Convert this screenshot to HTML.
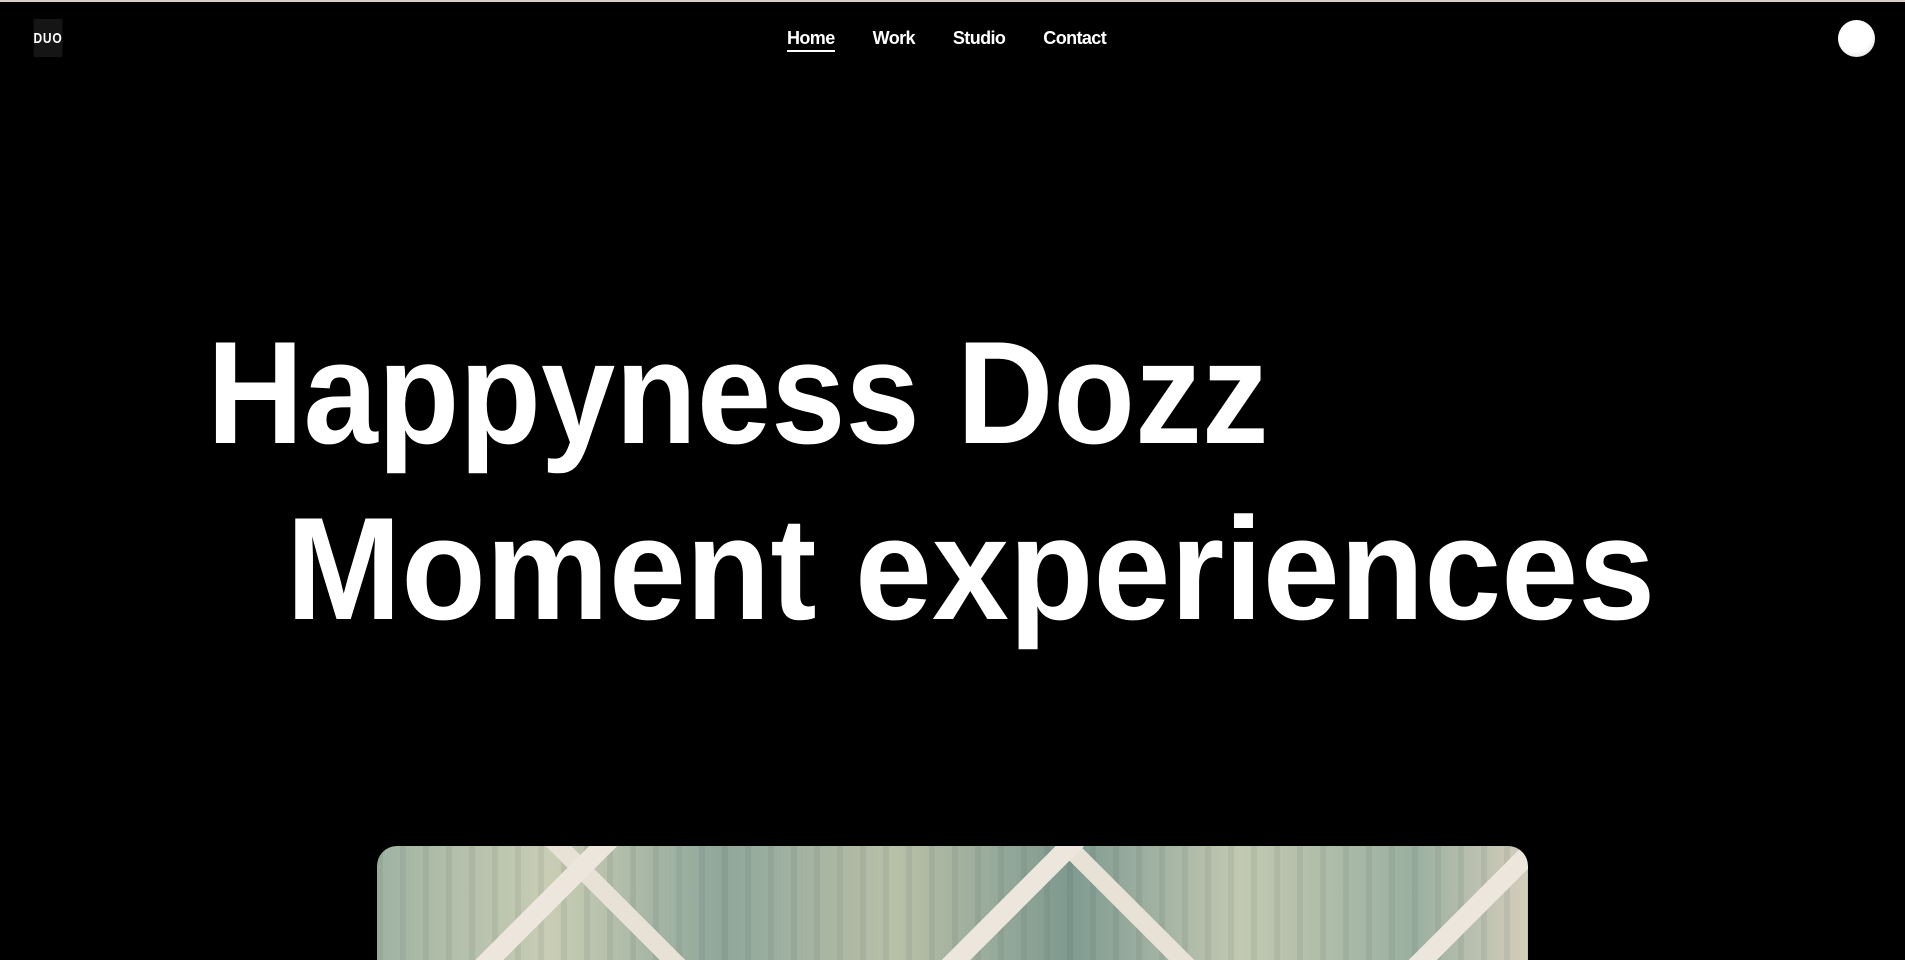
<!DOCTYPE html>
<html><head><style>
html,body{margin:0;padding:0;background:#000;width:1905px;height:960px;overflow:hidden;font-family:"Liberation Sans",Arial,sans-serif;color:#fff}
.top{position:absolute;left:0;top:0;width:1905px;height:2px;background:#d8cfc2}
.logo{position:absolute;left:30px;top:19px;width:36px;height:38px;background:#151515;font-size:15px;font-weight:bold;display:flex;align-items:center;justify-content:center;letter-spacing:1px;transform:scaleX(.8)}
nav{position:absolute;top:28px;left:787px;display:flex;gap:38px;font-weight:bold;font-size:18px;letter-spacing:-.6px}
nav span.a{border-bottom:2px solid #fff;padding-bottom:1px}
.circ{position:absolute;left:1838px;top:20px;width:37px;height:37px;border-radius:50%;background:radial-gradient(circle at 45% 40%,#fff 55%,#ccc)}
h1{position:absolute;margin:0;font-weight:bold;font-size:146px;line-height:1;white-space:nowrap;transform-origin:0 0}
.l1{left:207px;top:320px;transform:scaleX(.915)}.l2{left:286px;top:496px;transform:scaleX(.948)}
.img{position:absolute;left:377px;top:846px;width:1151px;height:114px;border-radius:20px 20px 0 0;overflow:hidden;
background:
repeating-linear-gradient(135deg,transparent 0 150px,#ece6dc 150px 170px,transparent 170px 330px),
repeating-linear-gradient(45deg,transparent 0 200px,#e8e2d6 200px 218px,transparent 218px 360px),
repeating-linear-gradient(90deg,rgba(40,60,60,.08) 0 6px,transparent 6px 23px),
linear-gradient(90deg,#9fb3a2,#c9cdb4 15%,#8fa79a 30%,#b9c0a8 45%,#7f9a90 60%,#c2c9b2 75%,#9bb0a0 90%,#d4cdbb)}
</style></head><body>
<div class="top"></div>
<div class="logo">DUO</div>
<nav><span class="a">Home</span><span>Work</span><span>Studio</span><span>Contact</span></nav>
<div class="circ"></div>
<h1 class="l1">Happyness Dozz</h1>
<h1 class="l2">Moment experiences</h1>
<div class="img"></div>
</body></html>
